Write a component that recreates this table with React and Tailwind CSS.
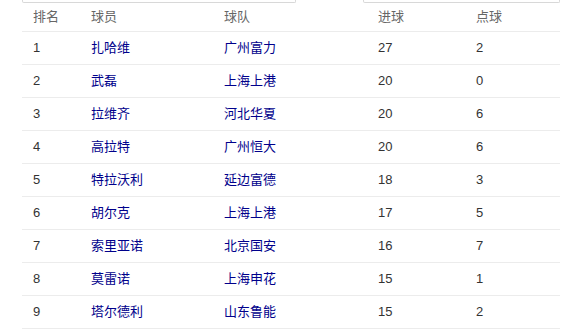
import React from 'react';

const rows = [
  [1, '扎哈维', '广州富力', 27, 2],
  [2, '武磊', '上海上港', 20, 0],
  [3, '拉维齐', '河北华夏', 20, 6],
  [4, '高拉特', '广州恒大', 20, 6],
  [5, '特拉沃利', '延边富德', 18, 3],
  [6, '胡尔克', '上海上港', 17, 5],
  [7, '索里亚诺', '北京国安', 16, 7],
  [8, '莫雷诺', '上海申花', 15, 1],
  [9, '塔尔德利', '山东鲁能', 15, 2],
];

export default function App() {
  return (
    <div className="w-[584px] h-[336px] bg-white overflow-hidden font-['Liberation_Sans','Noto_Sans_CJK_SC',sans-serif] text-[13px]">
      {/* cut-off panels above */}
      <div className="flex pl-[22px] h-[3px] items-end">
        <div className="w-[274px] h-[8px] border border-t-0 border-[#d8d8d8] rounded-b-[2px]" />
        <div className="w-[67px]" />
        <div className="w-[197px] h-[8px] border border-t-0 border-[#d8d8d8] rounded-b-[2px]" />
      </div>

      <div className="ml-[22px] w-[538px]">
        <div className="grid grid-cols-[58px_133px_154px_98px_95px] h-[29px] items-center border-b border-[#ececec] text-[#666]">
          <div className="pl-[11px]">排名</div>
          <div className="pl-[11px]">球员</div>
          <div className="pl-[11px]">球队</div>
          <div className="pl-[11px]">进球</div>
          <div className="pl-[11px]">点球</div>
        </div>
        {rows.map(([rank, player, team, goals, pens]) => (
          <div
            key={rank}
            className="grid grid-cols-[58px_133px_154px_98px_95px] h-[33px] items-center border-b border-[#ececec] text-[#333]"
          >
            <div className="pl-[11px]">{rank}</div>
            <div className="pl-[11px] text-[#00008b]">{player}</div>
            <div className="pl-[11px] text-[#00008b]">{team}</div>
            <div className="pl-[11px]">{goals}</div>
            <div className="pl-[11px]">{pens}</div>
          </div>
        ))}
      </div>
    </div>
  );
}
